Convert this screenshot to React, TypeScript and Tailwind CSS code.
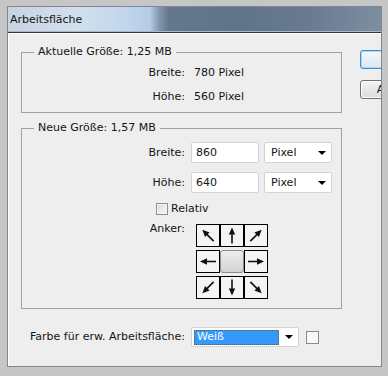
import React from "react";

const Arrow = ({ deg }: { deg: number }) => (
  <svg width="22" height="21" viewBox="0 0 22 21">
    <g transform={`rotate(${deg} 11 10.5)`}>
      <line x1="3" y1="10.5" x2="14" y2="10.5" stroke="#111" strokeWidth="1.6" />
      <polygon points="19,10.5 12,7.3 12,13.7" fill="#111" />
    </g>
  </svg>
);

const Caret = () => (
  <span className="w-0 h-0 border-l-[4px] border-r-[4px] border-t-[4px] border-l-transparent border-r-transparent border-t-black" />
);

const Cell = ({ deg }: { deg: number }) => (
  <div className="w-[24px] h-[23px] border border-black bg-[#f4f4f4] flex items-center justify-center">
    <Arrow deg={deg} />
  </div>
);

function SizeRow({ label, value }: { label: string; value: string }) {
  return (
    <div className="flex items-center h-[21px]">
      <span className="w-[163px] text-right">{label}</span>
      <div className="ml-[6px] w-[68px] h-[21px] bg-white border border-[#d3d3d3] rounded-[2px] flex items-center pl-[4px]">
        {value}
      </div>
      <div className="ml-[5px] w-[68px] h-[21px] bg-white border border-[#d3d3d3] rounded-[2px] flex items-center justify-between pl-[6px] pr-[5px]">
        <span>Pixel</span>
        <Caret />
      </div>
    </div>
  );
}

export default function App() {
  return (
    <div
      className="w-[388px] h-[376px] bg-[#c6c6c6] pt-[6px] pl-[7px] pr-[6px] pb-[9px] flex text-[11px] leading-[14px] text-[#141414]"
      style={{ fontFamily: '"DejaVu Sans", Tahoma, sans-serif' }}
    >
      <div className="flex-1 min-w-0 flex flex-col border border-[#7f8790]">
        {/* Title bar */}
        <div className="h-[26px] flex-none flex items-center pl-[2px] border-b border-[#2d3844] bg-[linear-gradient(90deg,#c6d4e2_0%,#d2e0ee_18%,#c0d5eb_32%,#b6cde6_38%,#8497ad_40.5%,#63778e_43%,#5f7389_62%,#677a90_80%,#7d8ea1_100%)] shadow-[inset_0_-1px_0_#a9b7c6]">
          Arbeitsfläche
        </div>

        {/* Body */}
        <div className="flex-1 flex bg-[#eeeeee] overflow-hidden shadow-[inset_1px_1px_0_#ffffff]">
          <div className="ml-[13px] w-[321px] flex-none flex flex-col">
            <fieldset className="mt-[12px] border border-[#a2a2a2] pb-[8px]">
              <legend className="ml-[12px] px-[4px] leading-[14px]">Aktuelle Größe: 1,25 MB</legend>
              <div className="mt-[7px] flex">
                <span className="w-[163px] text-right">Breite:</span>
                <span className="ml-[9px]">780 Pixel</span>
              </div>
              <div className="mt-[10px] flex">
                <span className="w-[163px] text-right">Höhe:</span>
                <span className="ml-[9px]">560 Pixel</span>
              </div>
            </fieldset>

            <fieldset className="mt-[8px] border border-[#a2a2a2] pb-[9px]">
              <legend className="ml-[12px] px-[4px] leading-[14px]">Neue Größe: 1,57 MB</legend>
              <div className="mt-[7px]">
                <SizeRow label="Breite:" value="860" />
              </div>
              <div className="mt-[9px]">
                <SizeRow label="Höhe:" value="640" />
              </div>
              <div className="mt-[9px] flex items-center h-[14px] pl-[134px]">
                <span className="w-[12px] h-[12px] border border-[#8e8f8f] bg-linear-to-br from-[#d8d8d8] to-[#fbfbfb] shadow-[inset_0_0_0_1px_#f4f4f4]" />
                <span className="ml-[3px]">Relativ</span>
              </div>
              <div className="mt-[6px] flex items-start">
                <span className="w-[163px] text-right">Anker:</span>
                <div className="ml-[11px] mt-[2px] grid grid-cols-3 gap-y-[3px]">
                  <Cell deg={225} />
                  <Cell deg={270} />
                  <Cell deg={315} />
                  <Cell deg={180} />
                  <div className="w-[24px] h-[23px] rounded-[3px] border border-[#8c8c8c] bg-linear-to-b from-[#eeeeee] to-[#d2d2d2]" />
                  <Cell deg={0} />
                  <Cell deg={135} />
                  <Cell deg={90} />
                  <Cell deg={45} />
                </div>
              </div>
            </fieldset>

            <div className="mt-[18px] ml-[9px] flex items-center">
              <span className="w-[155px] whitespace-nowrap">Farbe für erw. Arbeitsfläche:</span>
              <div className="ml-[6px] w-[108px] h-[20px] bg-white border border-[#d3d3d3] rounded-[2px] flex items-center justify-between pl-[2px] pr-[5px]">
                <div className="w-[85px] h-[15px] bg-[#3399ff] border border-dotted border-[#6b5a2a] text-white flex items-center pl-[2px]">
                  Weiß
                </div>
                <Caret />
              </div>
              <span className="ml-[7px] w-[13px] h-[13px] border border-[#8a8a8a] bg-[#f8f8f8]" />
            </div>
          </div>

          {/* Buttons */}
          <div className="ml-[18px] w-[93px] flex-none flex flex-col">
            <button className="mt-[17px] h-[19px] rounded-[3px] border border-[#3d8fd0] bg-linear-to-b from-[#f4f8fb] to-[#dde7ef] shadow-[inset_0_0_0_1px_#a8d8f4] leading-[14px]">
              OK
            </button>
            <button className="mt-[11px] h-[19px] rounded-[3px] border border-[#707070] bg-linear-to-b from-[#f3f3f3] to-[#dcdcdc] shadow-[inset_0_0_0_1px_#fbfbfb] leading-[14px]">
              Abbrechen
            </button>
          </div>
        </div>
      </div>
    </div>
  );
}
